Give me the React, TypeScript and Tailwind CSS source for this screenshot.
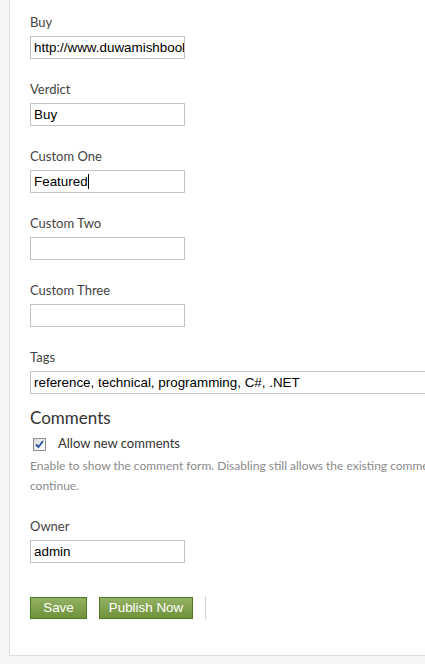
import React from "react";

const labelCls = "block text-[13px] leading-[18px] text-[#444] mb-[5px]";
const labelFont = { fontFamily: 'Lato, "Noto Sans", sans-serif' };
const inputCls =
  "block h-[23px] border border-[#c3c3c3] bg-white px-[3px] text-[13.4px] leading-[21px] text-black whitespace-nowrap overflow-hidden";
const inputFont = { fontFamily: '"Liberation Sans", Arial, sans-serif' };

function Field({ label, value, focused }: { label: string; value?: string; focused?: boolean }) {
  return (
    <div className="mb-[21px]">
      <div className={labelCls} style={labelFont}>{label}</div>
      <div
        className={`${inputCls} w-[155px] ${focused ? "border-[#5b6a46]" : ""}`}
        style={inputFont}
      >
        {value}
        {focused && <span className="inline-block w-px h-[15px] bg-black align-[-3px]" />}
      </div>
    </div>
  );
}

export default function App() {
  return (
    <div className="w-[425px] h-[664px] overflow-hidden bg-[#f5f5f5] pl-[9px]">
      <div className="w-[600px] h-[656px] bg-white border-l border-b border-[#dedede] pl-[20px] pt-[13px]">
        <Field label="Buy" value="http://www.duwamishbooks.com" />
        <Field label="Verdict" value="Buy" />
        <Field label="Custom One" value="Featured" focused />
        <Field label="Custom Two" />
        <Field label="Custom Three" />
        <div className="mb-[12px]">
          <div className={labelCls} style={labelFont}>Tags</div>
          <div className={`${inputCls} w-[520px]`} style={inputFont}>
            reference, technical, programming, C#, .NET
          </div>
        </div>
        <div className="text-[17px] leading-[24px] text-[#333]" style={labelFont}>Comments</div>
        <div className="flex items-center mt-[6px] h-[16px]">
          <div className="ml-[3px] w-[13px] h-[13px] border border-[#8e8f8f] bg-gradient-to-br from-[#dcdcdc] to-[#ffffff] flex items-center justify-center">
            <svg width="9" height="9" viewBox="0 0 9 9">
              <path d="M1 4.5 L3.5 7 L8 1" fill="none" stroke="#2a4ea6" strokeWidth="1.8" />
            </svg>
          </div>
          <span className="ml-[12px] text-[13px] text-[#333]" style={labelFont}>Allow new comments</span>
        </div>
        <div className="mt-[4px] text-[12px] leading-[20px] text-[#8a8a8a] whitespace-nowrap" style={labelFont}>
          Enable to show the comment form. Disabling still allows the existing comments to
          <br />
          continue.
        </div>
        <div className="mt-[21px]">
          <div className={labelCls} style={labelFont}>Owner</div>
          <div className={`${inputCls} w-[155px]`} style={inputFont}>admin</div>
        </div>
        <div className="flex items-center mt-[33px]" style={inputFont}>
          <button className="h-[22px] w-[57px] border border-[#4d7a27] bg-gradient-to-b from-[#94b263] to-[#6f9239] text-white text-[13.4px] leading-[20px]">
            Save
          </button>
          <button className="ml-[12px] h-[22px] w-[94px] border border-[#4d7a27] bg-gradient-to-b from-[#94b263] to-[#6f9239] text-white text-[13.4px] leading-[20px]">
            Publish Now
          </button>
          <div className="ml-[12px] w-px h-[23px] bg-[#d0d0d0]" />
        </div>
      </div>
    </div>
  );
}
